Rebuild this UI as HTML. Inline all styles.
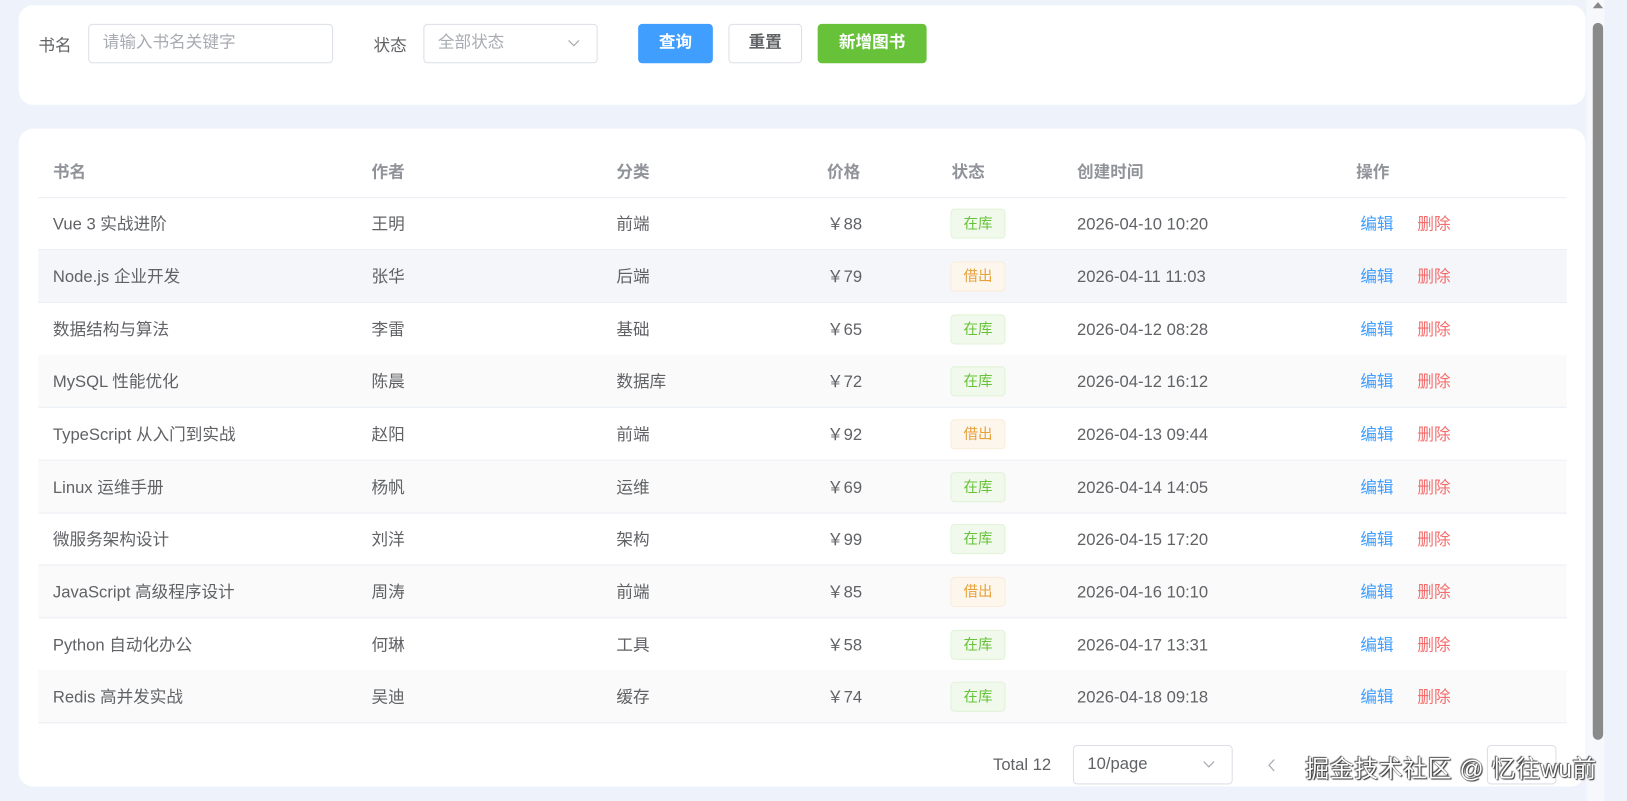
<!DOCTYPE html>
<html><head><meta charset="utf-8"><style>
*{box-sizing:border-box;margin:0;padding:0}
html,body{width:1627px;height:801px;overflow:hidden}
body{background:#eef3fb;font-family:"Liberation Sans","Noto Sans CJK SC",sans-serif;color:#606266;position:relative}
#w{position:absolute;left:0;top:0;width:1568px;height:772px;transform:scale(1.03763);transform-origin:0 0}
.card{position:absolute;background:#fff;border-radius:14px}
.abs{position:absolute}
.lbl{font-size:16px;color:#606266}
.inp{position:absolute;border:1px solid #dcdfe6;border-radius:4px;height:38px;font-size:16px;color:#a8abb2;padding:0 13px;line-height:36px}
.btn{position:absolute;height:38px;border-radius:4px;font-size:16px;line-height:38px;text-align:center;font-weight:bold}
.row{position:absolute;left:37px;width:1473px;height:51px;border-bottom:1px solid #ebeef5;font-size:16px;color:#606266}
.row span{position:absolute;top:0;line-height:50px;padding-top:2px;white-space:nowrap}
.hd span{color:#909399;font-weight:bold}
.tag{position:absolute;top:11px;width:53px;height:29px;border-radius:4px;font-size:14px;line-height:27px;text-align:center}
.ok{background:#f0f9eb;border:1px solid #e1f3d8;color:#67c23a}
.out{background:#fdf6ec;border:1px solid #faecd8;color:#e6a23c}
.e{color:#409eff}.d{color:#f56c6c}
</style></head><body><div id="w">
<div class="card" style="left:18px;top:5px;width:1510px;height:96px"></div>
<div class="abs lbl" style="left:37px;top:30px">书名</div>
<div class="inp" style="left:85px;top:23px;width:236px">请输入书名关键字</div>
<div class="abs lbl" style="left:360px;top:30px">状态</div>
<div class="inp" style="left:408px;top:23px;width:168px">全部状态<svg style="position:absolute;right:16px;top:14px" width="12" height="8" viewBox="0 0 12 8"><path d="M1 1l5 5 5-5" fill="none" stroke="#a8abb2" stroke-width="1.2"/></svg></div>
<div class="btn" style="left:615px;top:23px;width:72px;background:#409eff;color:#fff">查询</div>
<div class="btn" style="left:702px;top:23px;width:71px;border:1px solid #dcdfe6;color:#606266;line-height:36px">重置</div>
<div class="btn" style="left:788px;top:23px;width:105px;background:#67c23a;color:#fff">新增图书</div>

<div class="card" style="left:18px;top:124px;width:1510px;height:634px"></div>
<div class="row hd" style="top:140px"><span style="left:14px">书名</span><span style="left:321px">作者</span><span style="left:557px">分类</span><span style="left:760px">价格</span><span style="left:880px">状态</span><span style="left:1001px">创建时间</span><span style="left:1270px">操作</span></div>

<div class="row" style="top:190px"><span style="left:14px">Vue 3 实战进阶</span><span style="left:321px">王明</span><span style="left:557px">前端</span><span style="left:760px">￥88</span><div class="tag ok" style="left:879px">在库</div><span style="left:1001px">2026-04-10 10:20</span><span class="e" style="left:1274px">编辑</span><span class="d" style="left:1329px">删除</span></div>
<div class="row" style="top:241px;background:#f4f6fa"><span style="left:14px">Node.js 企业开发</span><span style="left:321px">张华</span><span style="left:557px">后端</span><span style="left:760px">￥79</span><div class="tag out" style="left:879px">借出</div><span style="left:1001px">2026-04-11 11:03</span><span class="e" style="left:1274px">编辑</span><span class="d" style="left:1329px">删除</span></div>
<div class="row" style="top:292px"><span style="left:14px">数据结构与算法</span><span style="left:321px">李雷</span><span style="left:557px">基础</span><span style="left:760px">￥65</span><div class="tag ok" style="left:879px">在库</div><span style="left:1001px">2026-04-12 08:28</span><span class="e" style="left:1274px">编辑</span><span class="d" style="left:1329px">删除</span></div>
<div class="row" style="top:342px;background:#fafafa"><span style="left:14px">MySQL 性能优化</span><span style="left:321px">陈晨</span><span style="left:557px">数据库</span><span style="left:760px">￥72</span><div class="tag ok" style="left:879px">在库</div><span style="left:1001px">2026-04-12 16:12</span><span class="e" style="left:1274px">编辑</span><span class="d" style="left:1329px">删除</span></div>
<div class="row" style="top:393px"><span style="left:14px">TypeScript 从入门到实战</span><span style="left:321px">赵阳</span><span style="left:557px">前端</span><span style="left:760px">￥92</span><div class="tag out" style="left:879px">借出</div><span style="left:1001px">2026-04-13 09:44</span><span class="e" style="left:1274px">编辑</span><span class="d" style="left:1329px">删除</span></div>
<div class="row" style="top:444px;background:#fafafa"><span style="left:14px">Linux 运维手册</span><span style="left:321px">杨帆</span><span style="left:557px">运维</span><span style="left:760px">￥69</span><div class="tag ok" style="left:879px">在库</div><span style="left:1001px">2026-04-14 14:05</span><span class="e" style="left:1274px">编辑</span><span class="d" style="left:1329px">删除</span></div>
<div class="row" style="top:494px"><span style="left:14px">微服务架构设计</span><span style="left:321px">刘洋</span><span style="left:557px">架构</span><span style="left:760px">￥99</span><div class="tag ok" style="left:879px">在库</div><span style="left:1001px">2026-04-15 17:20</span><span class="e" style="left:1274px">编辑</span><span class="d" style="left:1329px">删除</span></div>
<div class="row" style="top:545px;background:#fafafa"><span style="left:14px">JavaScript 高级程序设计</span><span style="left:321px">周涛</span><span style="left:557px">前端</span><span style="left:760px">￥85</span><div class="tag out" style="left:879px">借出</div><span style="left:1001px">2026-04-16 10:10</span><span class="e" style="left:1274px">编辑</span><span class="d" style="left:1329px">删除</span></div>
<div class="row" style="top:596px"><span style="left:14px">Python 自动化办公</span><span style="left:321px">何琳</span><span style="left:557px">工具</span><span style="left:760px">￥58</span><div class="tag ok" style="left:879px">在库</div><span style="left:1001px">2026-04-17 13:31</span><span class="e" style="left:1274px">编辑</span><span class="d" style="left:1329px">删除</span></div>
<div class="row" style="top:646px;background:#fafafa"><span style="left:14px">Redis 高并发实战</span><span style="left:321px">吴迪</span><span style="left:557px">缓存</span><span style="left:760px">￥74</span><div class="tag ok" style="left:879px">在库</div><span style="left:1001px">2026-04-18 09:18</span><span class="e" style="left:1274px">编辑</span><span class="d" style="left:1329px">删除</span></div>

<div class="abs" style="left:957px;top:729px;font-size:16px">Total 12</div>
<div class="inp" style="left:1034px;top:718px;width:154px;height:38px;color:#606266">10/page<svg style="position:absolute;right:16px;top:14px" width="12" height="8" viewBox="0 0 12 8"><path d="M1 1l5 5 5-5" fill="none" stroke="#a8abb2" stroke-width="1.2"/></svg></div>
<svg class="abs" style="left:1222px;top:731px" width="8" height="13" viewBox="0 0 8 13"><path d="M6 1L1 6.5 6 12" fill="none" stroke="#a8abb2" stroke-width="1.2"/></svg>
<div class="abs" style="left:1433px;top:718px;width:67px;height:38px;border:1px solid #dcdfe6;border-radius:4px;background:#fff"></div>

<div class="abs" style="left:1529px;top:0;width:17px;height:772px;background:#f6f8fc"></div>
<div class="abs" style="width:0;height:0;border-left:5px solid transparent;border-right:5px solid transparent;border-bottom:6px solid #888;left:1535px;top:2px"></div>
<div class="abs" style="left:1535px;top:22px;width:10px;height:691px;background:#8a8a8a;border-radius:5px"></div>

<div class="abs" style="left:1258px;top:722px;font-size:23px;letter-spacing:0.6px;color:#fff;text-shadow:0 0 1px #333,1px 1px 1px #333,-1px -1px 1px #555;white-space:nowrap">掘金技术社区 @ 忆往wu前</div>
</div></body></html>
